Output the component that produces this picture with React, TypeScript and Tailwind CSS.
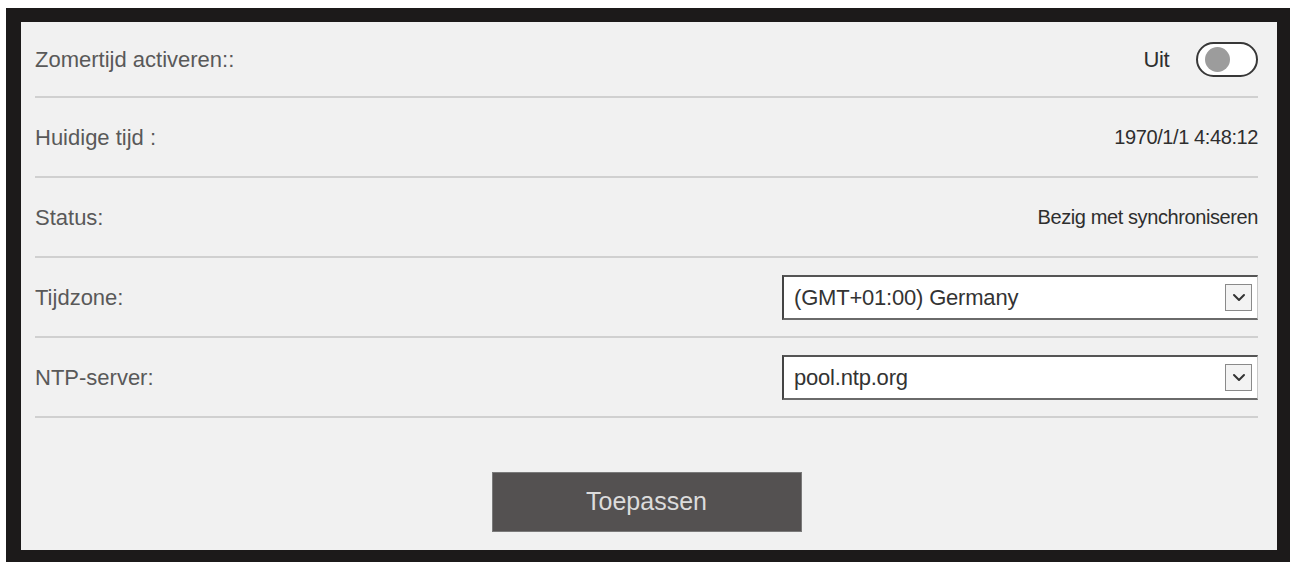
import React from "react";

type Row = {
  label: string;
  kind: "toggle" | "text" | "select";
  value?: string;
};

const rows: Row[] = [
  { label: "Zomertijd activeren::", kind: "toggle", value: "Uit" },
  { label: "Huidige tijd :", kind: "text", value: "1970/1/1 4:48:12" },
  { label: "Status:", kind: "text", value: "Bezig met synchroniseren" },
  { label: "Tijdzone:", kind: "select", value: "(GMT+01:00) Germany" },
  { label: "NTP-server:", kind: "select", value: "pool.ntp.org" },
];

const Toggle = ({ label }: { label: string }) => (
  <div className="flex items-center gap-[27px]">
    <span className="text-[22px] tracking-[-0.5px] text-[#2e2e2e]">{label}</span>
    <div className="w-[62px] h-[35px] rounded-full border-2 border-[#383838] bg-white flex items-center">
      <div className="w-[25px] h-[25px] rounded-full bg-[#9c9c9c] ml-[7px]" />
    </div>
  </div>
);

const Select = ({ value }: { value: string }) => (
  <div className="w-[476px] h-[45px] bg-white border-t-2 border-l-2 border-b-2 border-r border-t-[#555] border-l-[#444] border-b-[#6a6a6a] border-r-[#c8c8c8] flex items-center justify-between pl-[10px] pr-[5px]">
    <span className="text-[22px] tracking-[-0.2px] text-[#333]">{value}</span>
    <div className="w-[27px] h-[27px] border border-[#8a8a8a] bg-[#f3f3f3] flex items-center justify-center">
      <svg width="14" height="9" viewBox="0 0 14 9" fill="none">
        <polyline
          points="2,2 7,7 12,2"
          stroke="#333"
          strokeWidth="2"
          strokeLinecap="round"
          strokeLinejoin="round"
        />
      </svg>
    </div>
  </div>
);

const App = () => {
  return (
    <div
      className="w-[1290px] h-[562px] bg-white pt-[8px] pl-[6px] overflow-hidden"
      style={{ fontFamily: '"Liberation Sans", Arial, sans-serif' }}
    >
      <div className="w-[1284px] h-[554px] bg-[#1c1a1a] pt-[14px] pl-[15px] pr-[13px] pb-[12px]">
        <div className="h-full bg-[#f1f1f1] pl-[14px] pr-[19px] flex flex-col">
          {rows.map((row, i) => (
            <div
              key={row.label}
              className={`flex items-center justify-between border-b-2 border-[#d0d0d0] ${
                i === 0 ? "h-[76px]" : "h-[80px]"
              }`}
            >
              <span className="text-[22px] text-[#595959]">{row.label}</span>
              {row.kind === "toggle" && <Toggle label={row.value ?? ""} />}
              {row.kind === "text" && (
                <span className="text-[20px] tracking-[-0.4px] text-[#2e2e2e]">
                  {row.value}
                </span>
              )}
              {row.kind === "select" && <Select value={row.value ?? ""} />}
            </div>
          ))}
          <div className="flex justify-center pt-[54px]">
            <button
              type="button"
              className="w-[310px] h-[60px] bg-[#545151] text-[#dcdcdc] text-[25px] border border-[#7a7a7a]"
            >
              Toepassen
            </button>
          </div>
        </div>
      </div>
    </div>
  );
};

export default App;
